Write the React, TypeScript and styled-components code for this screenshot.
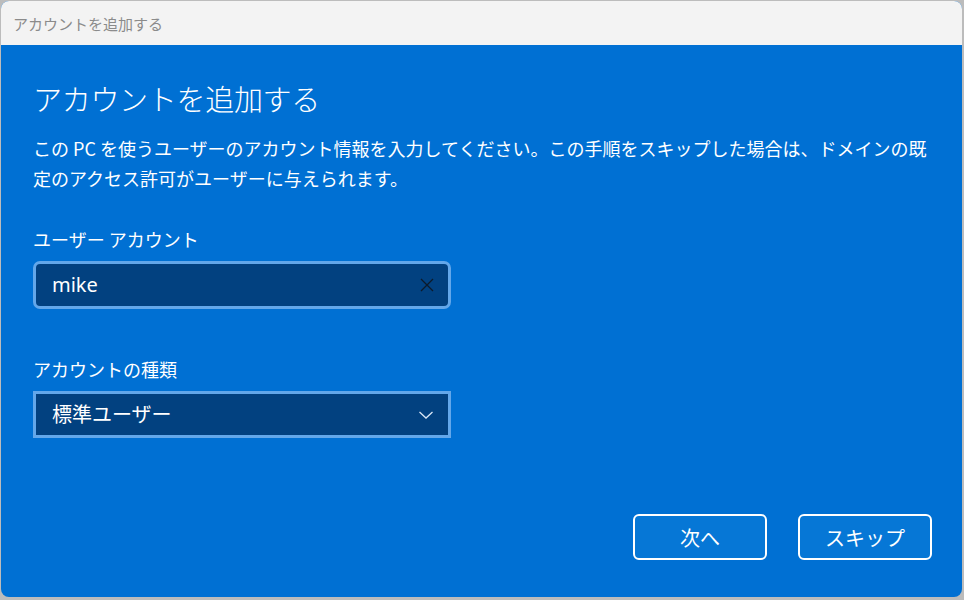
import React from "react"
import styled, { createGlobalStyle } from "styled-components"

const GlobalStyle = createGlobalStyle`
  html, body {
    margin: 0;
    padding: 0;
    background: #bcbcbc;
  }
  body {
    font-family: "Noto Sans CJK JP", "Noto Sans", sans-serif;
  }
`

const Screen = styled.div`
  width: 964px;
  height: 600px;
  padding: 1px 2px 3px 1px;
  box-sizing: border-box;
  display: flex;
`

const Window = styled.div`
  flex: 1;
  display: flex;
  flex-direction: column;
  border-radius: 8px;
  overflow: hidden;
  background: #0070d3;
`

const TitleBar = styled.div`
  height: 44px;
  flex-shrink: 0;
  display: flex;
  align-items: center;
  padding-left: 12px;
  background: #f3f3f3;
  color: #8b8b8b;
  font-size: 15px;
`

const Body = styled.div`
  flex: 1;
  display: flex;
  flex-direction: column;
  padding: 33px 30px 37px 32px;
  color: #ffffff;
`

const Heading = styled.h1`
  margin: 0;
  font-size: 29px;
  font-weight: 300;
  line-height: 40px;
  letter-spacing: -0.3px;
`

const Description = styled.p`
  margin: 15px 0 0;
  font-size: 18px;
  line-height: 30px;
  font-weight: 400;
`

const Field = styled.div<{ $top: number }>`
  display: flex;
  flex-direction: column;
  margin-top: ${(p) => p.$top}px;
`

const Label = styled.label`
  font-size: 18px;
  line-height: 26px;
  margin-bottom: 9px;
`

const Box = styled.div<{ $rounded?: boolean; $h: number }>`
  width: 418px;
  height: ${(p) => p.$h}px;
  box-sizing: border-box;
  display: flex;
  align-items: center;
  justify-content: space-between;
  padding: 0 14px 0 16px;
  background: #024180;
  border: 3px solid #63a7ea;
  border-radius: ${(p) => (p.$rounded ? "7px" : "0")};
  font-size: 20px;
  color: #ffffff;
`

const Value = styled.span`
  font-family: "Noto Sans", "Noto Sans CJK JP", sans-serif;
  font-size: 20px;
  line-height: 1;
`

const Actions = styled.div`
  margin-top: auto;
  display: flex;
  justify-content: flex-end;
  gap: 31px;
`

const Button = styled.button`
  width: 134px;
  height: 46px;
  box-sizing: border-box;
  border: 2px solid #ffffff;
  border-radius: 6px;
  background: #0677d6;
  color: #ffffff;
  font-family: "Noto Sans CJK JP", sans-serif;
  font-size: 20px;
  padding: 0;
`

const Clear = () => (
  <svg width="14" height="14" viewBox="0 0 14 14">
    <path d="M1 1 L13 13 M13 1 L1 13" stroke="#0d1a2a" strokeWidth="1.3" />
  </svg>
)

const Chevron = () => (
  <svg width="16" height="10" viewBox="0 0 16 10">
    <path d="M1.5 2 L8 8 L14.5 2" fill="none" stroke="#d8e6f5" strokeWidth="1.3" />
  </svg>
)

export default function App() {
  return (
    <Screen>
      <GlobalStyle />
      <Window>
        <TitleBar>アカウントを追加する</TitleBar>
        <Body>
          <Heading>アカウントを追加する</Heading>
          <Description>
            この PC を使うユーザーのアカウント情報を入力してください。この手順をスキップした場合は、ドメインの既定のアクセス許可がユーザーに与えられます。
          </Description>
          <Field $top={33}>
            <Label>ユーザー アカウント</Label>
            <Box $rounded $h={48}>
              <Value>mike</Value>
              <Clear />
            </Box>
          </Field>
          <Field $top={47}>
            <Label>アカウントの種類</Label>
            <Box $h={47}>
              <Value>標準ユーザー</Value>
              <Chevron />
            </Box>
          </Field>
          <Actions>
            <Button>次へ</Button>
            <Button>スキップ</Button>
          </Actions>
        </Body>
      </Window>
    </Screen>
  )
}
